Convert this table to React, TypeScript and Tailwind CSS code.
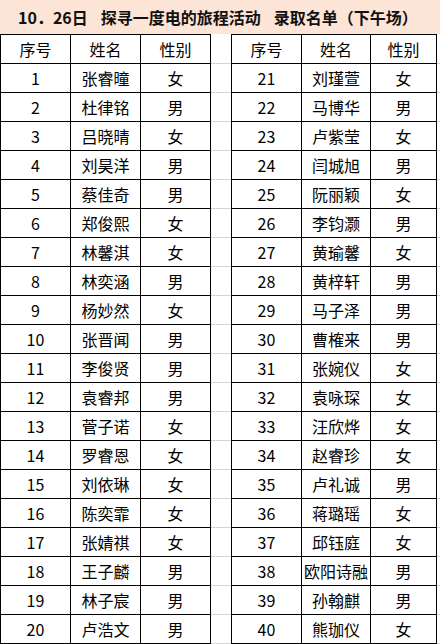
import React from "react";

const left: [string, string, string][] = [
  ["1", "张睿曈", "女"],
  ["2", "杜律铭", "男"],
  ["3", "吕晓晴", "女"],
  ["4", "刘昊洋", "男"],
  ["5", "蔡佳奇", "男"],
  ["6", "郑俊熙", "女"],
  ["7", "林馨淇", "女"],
  ["8", "林奕涵", "男"],
  ["9", "杨妙然", "女"],
  ["10", "张晋闻", "男"],
  ["11", "李俊贤", "男"],
  ["12", "袁睿邦", "男"],
  ["13", "菅子诺", "女"],
  ["14", "罗睿恩", "女"],
  ["15", "刘依琳", "女"],
  ["16", "陈奕霏", "女"],
  ["17", "张婧祺", "女"],
  ["18", "王子麟", "男"],
  ["19", "林子宸", "男"],
  ["20", "卢浩文", "男"],
];

const right: [string, string, string][] = [
  ["21", "刘瑾萱", "女"],
  ["22", "马博华", "男"],
  ["23", "卢紫莹", "女"],
  ["24", "闫城旭", "男"],
  ["25", "阮丽颖", "女"],
  ["26", "李钧灏", "男"],
  ["27", "黄瑜馨", "女"],
  ["28", "黄梓轩", "男"],
  ["29", "马子泽", "男"],
  ["30", "曹榷来", "男"],
  ["31", "张婉仪", "女"],
  ["32", "袁咏琛", "女"],
  ["33", "汪欣烨", "女"],
  ["34", "赵睿珍", "女"],
  ["35", "卢礼诚", "男"],
  ["36", "蒋璐瑶", "女"],
  ["37", "邱钰庭", "女"],
  ["38", "欧阳诗融", "男"],
  ["39", "孙翰麒", "男"],
  ["40", "熊珈仪", "女"],
];

const font = { fontFamily: '"Noto Sans CJK SC", "Noto Sans", sans-serif' };

function Row({
  l,
  r,
  header,
}: {
  l: [string, string, string];
  r: [string, string, string];
  header?: boolean;
}) {
  const h = header ? "h-[30px] border-t" : "h-[29px]";
  const cell = `flex items-center justify-center border-b border-r border-black ${h}`;
  return (
    <div className="flex text-[16px] text-black leading-none">
      <div className={`${cell} w-[71px] border-l`}>{l[0]}</div>
      <div className={`${cell} w-[70px]`}>{l[1]}</div>
      <div className={`${cell} w-[70px]`}>{l[2]}</div>
      <div className={`w-[20px] border-b border-[#d4d4d4] ${header ? "h-[30px]" : "h-[29px]"}`} />
      <div className={`${cell} w-[71px] border-l`}>{r[0]}</div>
      <div className={`${cell} w-[69px]`}>{r[1]}</div>
      <div className={`${cell} w-[66px]`}>{r[2]}</div>
      <div className={`flex-1 border-b border-[#d4d4d4] ${header ? "h-[30px]" : "h-[29px]"}`} />
    </div>
  );
}

export default function App() {
  return (
    <div className="w-[440px] h-[644px] bg-white overflow-hidden" style={font}>
      <div className="h-[34px] bg-[#fce4d6] flex items-center pl-[18px] text-[16px] font-bold text-[#111] whitespace-nowrap">
        <span>10．26日</span>
        <span className="ml-[13px]">探寻一度电的旅程活动</span>
        <span className="ml-[13px]">录取名单（下午场）</span>
      </div>
      <Row l={["序号", "姓名", "性别"]} r={["序号", "姓名", "性别"]} header />
      {left.map((l, i) => (
        <Row key={i} l={l} r={right[i]} />
      ))}
    </div>
  );
}
